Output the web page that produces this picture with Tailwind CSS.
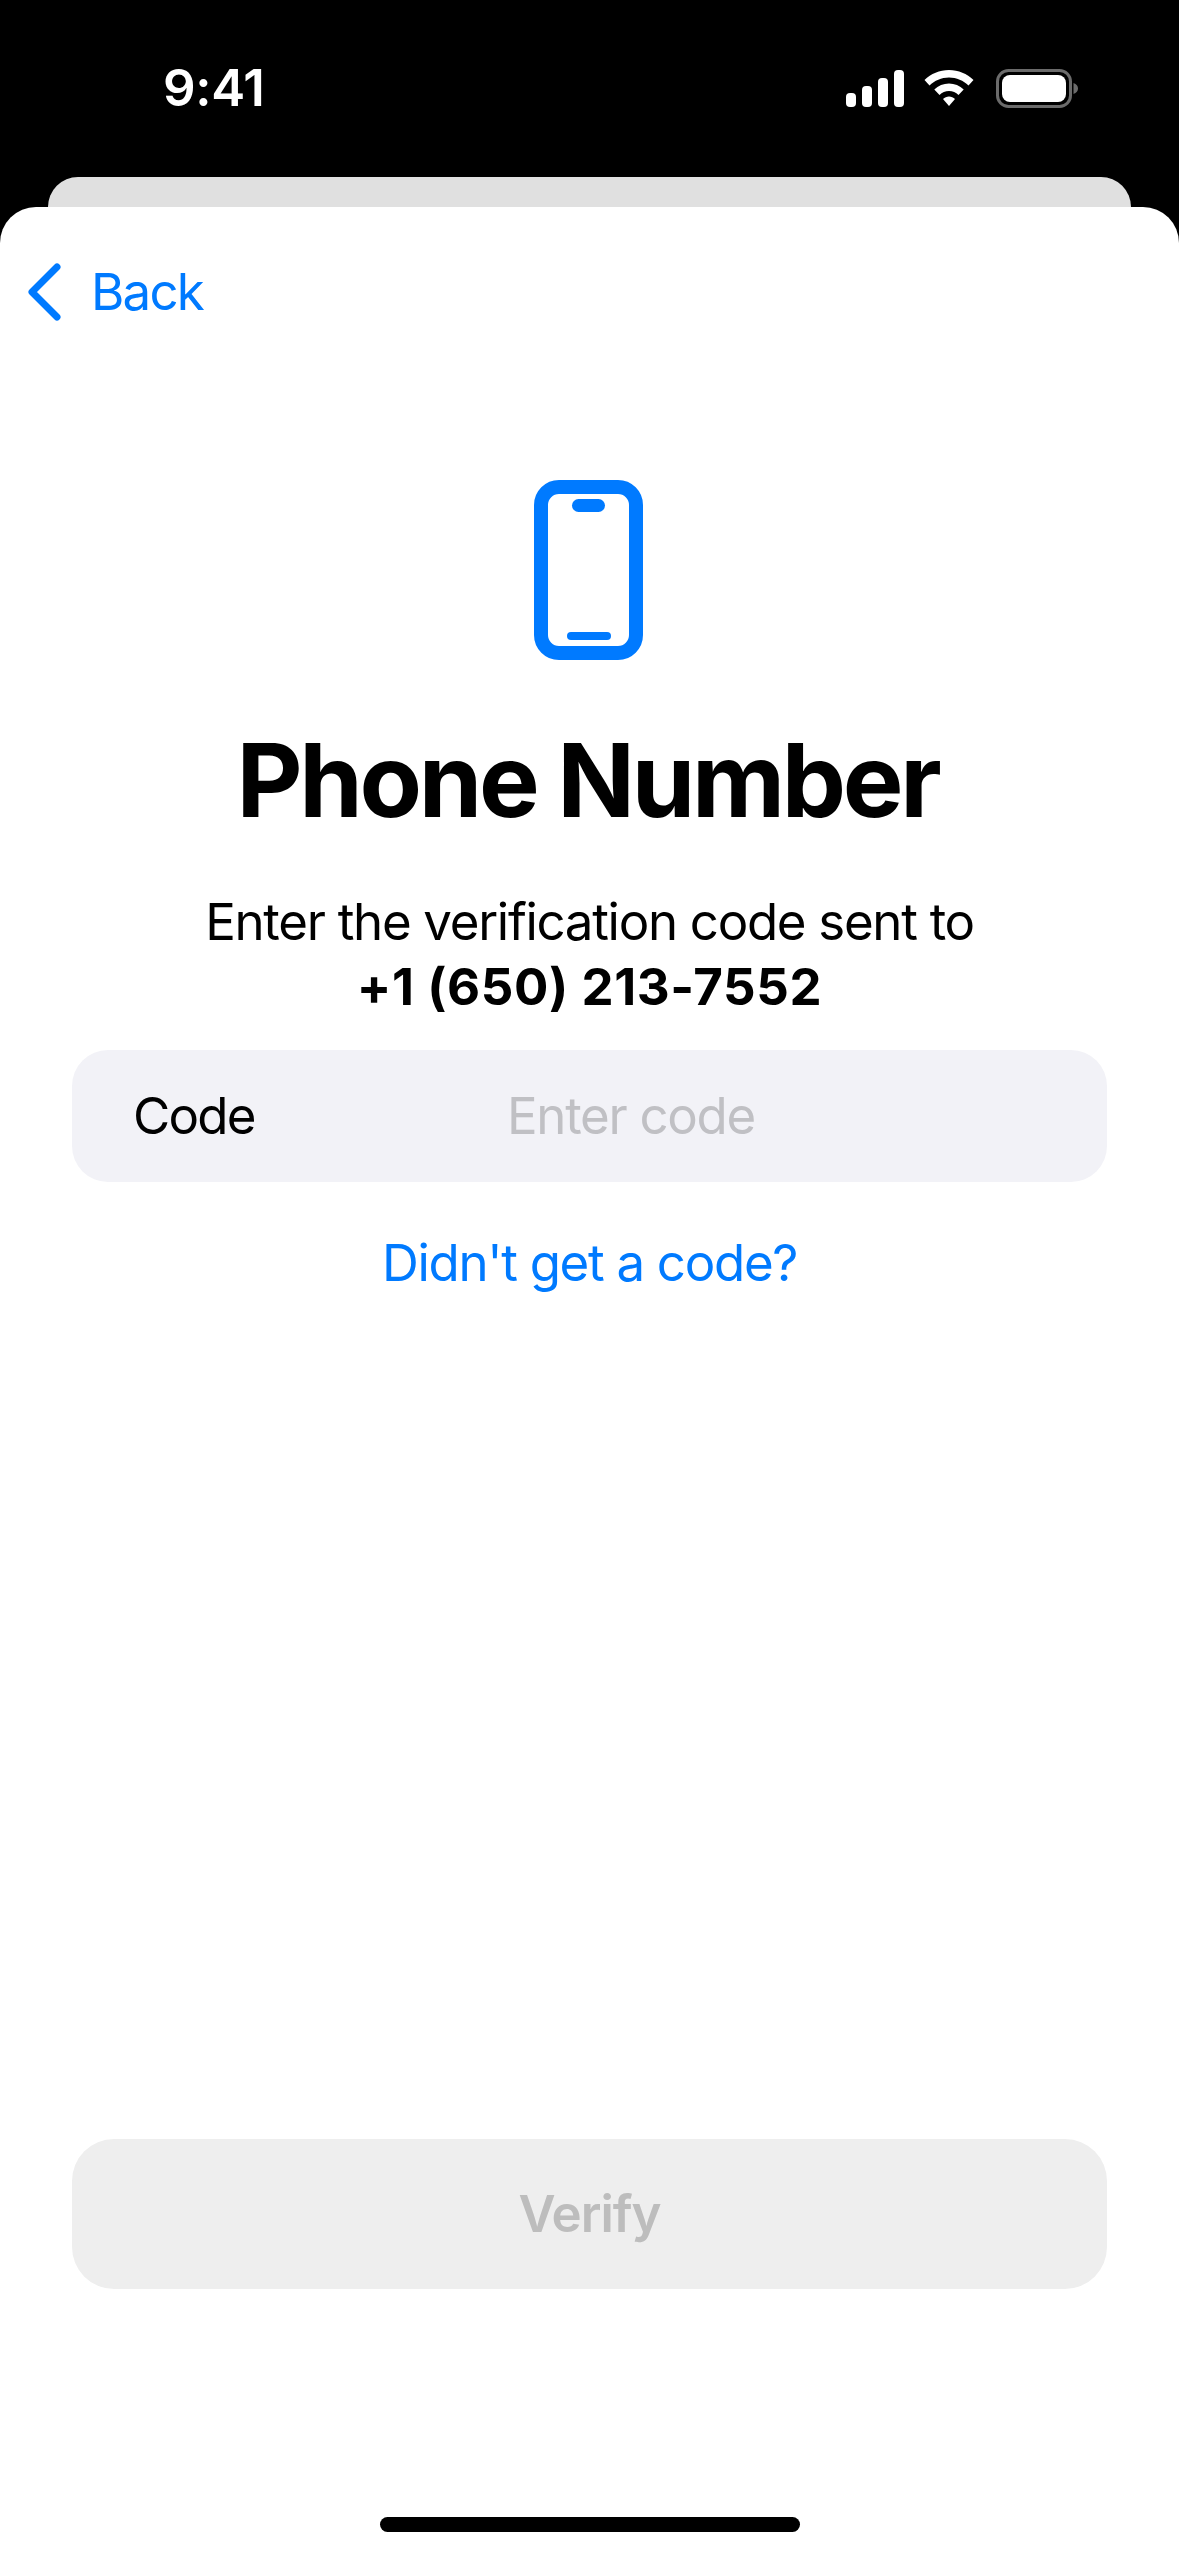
<!doctype html>
<html>
<head>
<meta charset="utf-8">
<script src="https://cdn.jsdelivr.net/npm/@tailwindcss/browser@4"></script>
</head>
<body class="bg-black">
<div class="w-[1179px] h-[2556px] bg-black flex flex-col overflow-hidden font-['Inter',sans-serif]">
  <div class="h-[177px] shrink-0 flex items-start justify-between pl-[163px] pr-[101px] pt-[62px]">
    <span class="text-white text-[51px] leading-[52px] font-semibold tracking-[-0.3px]">9:41</span>
    <div class="flex items-center gap-[20px] mt-[7px]">
      <svg width="58" height="37" viewBox="0 0 58 37" fill="#fff"><rect x="0" y="23" width="10" height="14" rx="4"/><rect x="16" y="16" width="10" height="21" rx="4"/><rect x="32" y="8" width="10" height="29" rx="4"/><rect x="48" y="0" width="10" height="37" rx="4"/></svg>
      <svg width="50" height="38" viewBox="0 0 50 38" fill="#fff"><path d="M25 0C15.500 0 7 3.800 0.500 10L5.500 15.500C10.500 10.500 17.500 7.500 25 7.500C32.500 7.500 39.500 10.500 44.500 15.500L49.500 10C43 3.800 34.500 0 25 0Z"/><path d="M25 13.500C19.500 13.500 14.200 15.700 10.300 19.600L15.500 25C18 22.500 21.400 21 25 21C28.600 21 32 22.500 34.500 25L39.700 19.600C35.800 15.700 30.500 13.500 25 13.500Z"/><path d="M25 26.500C22.800 26.500 20.600 27.400 19 29L25 36L31 29C29.400 27.400 27.200 26.500 25 26.500Z"/></svg>
      <svg width="82" height="39" viewBox="0 0 82 39" class="ml-[2px]"><rect x="1.500" y="1.500" width="73" height="36" rx="11" fill="none" stroke="#6b6b6b" stroke-width="3"/><rect x="6" y="6" width="64" height="27" rx="8" fill="#fff"/><path d="M77.500 14C80.500 15 82 17 82 19.500C82 22 80.500 24 77.500 25Z" fill="#6b6b6b"/></svg>
    </div>
  </div>
  <div class="h-[30px] shrink-0 mx-[48px] bg-[#e0e0e0] rounded-t-[30px]"></div>
  <div class="flex-1 bg-white rounded-t-[36px] flex flex-col items-center">
    <div class="w-full h-[151px] shrink-0 flex items-center pl-[27px] gap-[29px] pt-[18px]">
      <svg width="36" height="58" viewBox="0 0 36 58" fill="none" stroke="#007aff" stroke-width="7" stroke-linecap="round" stroke-linejoin="round"><path d="M30 4L5 29L30 54"/></svg>
      <span class="text-[51px] leading-[60px] text-[#007aff] tracking-[-1.8px] -ml-[1px]">Back</span>
    </div>
    <svg width="110" height="180" viewBox="0 0 110 180" class="mt-[122px] shrink-0 -translate-x-[1px]" fill="#007aff"><rect x="7" y="7" width="95" height="166" rx="18" fill="none" stroke="#007aff" stroke-width="14"/><rect x="38" y="19" width="33" height="13" rx="6.500"/><rect x="33" y="152" width="44" height="8" rx="4"/></svg>
    <h1 class="mt-[60px] text-[102px] leading-[120px] font-bold text-black tracking-[-3.3px] -translate-x-[2px]">Phone Number</h1>
    <p class="mt-[49px] text-[51px] leading-[65px] text-black text-center tracking-[-1.3px]">Enter the verification code sent to<br><span class="font-bold tracking-[0.6px]">+1 (650) 213-7552</span></p>
    <div class="mt-[31px] w-[1035px] h-[132px] shrink-0 bg-[#f2f2f7] rounded-[36px] flex items-center pl-[61px]">
      <span class="w-[374px] text-[51px] text-black tracking-[-1.8px]">Code</span>
      <span class="text-[51px] text-[#c0c0c4] tracking-[-1.3px]">Enter code</span>
    </div>
    <div class="mt-[48px] text-[51px] leading-[66px] text-[#007aff] tracking-[-1.3px]">Didn't get a code?</div>
    <div class="mt-auto w-[1035px] h-[150px] shrink-0 bg-[#eeeeee] rounded-[42px] flex items-center justify-center text-[51px] font-semibold text-[#bdbdbd] tracking-[-1px]">Verify</div>
    <div class="mt-[228px] mb-[24px] w-[420px] h-[15px] shrink-0 bg-black rounded-full"></div>
  </div>
</div>
</body>
</html>
